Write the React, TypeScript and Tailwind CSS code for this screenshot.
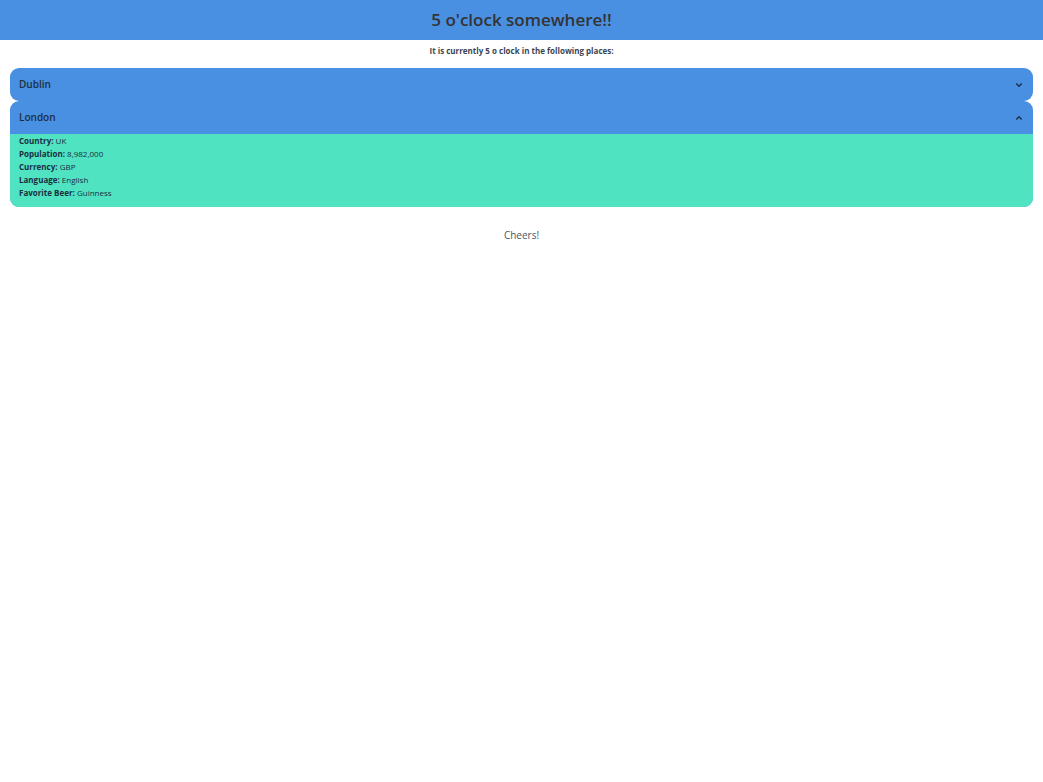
import { useState } from "react";

type Place = {
  name: string;
  facts: [string, string][];
};

const places: Place[] = [
  {
    name: "Dublin",
    facts: [
      ["Country", "Ireland"],
      ["Currency", "EUR"],
      ["Language", "English"],
      ["Favorite Beer", "Guinness"],
    ],
  },
  {
    name: "London",
    facts: [
      ["Country", "UK"],
      ["Population", "8,982,000"],
      ["Currency", "GBP"],
      ["Language", "English"],
      ["Favorite Beer", "Guinness"],
    ],
  },
];

function Chevron({ open }: { open: boolean }) {
  return (
    <svg
      viewBox="0 0 24 24"
      aria-hidden="true"
      className={open ? "size-3 rotate-180 fill-current stroke-current" : "size-3 fill-current stroke-current"}
    >
      <path d="M16.59 8.59L12 13.17 7.41 8.59 6 10l6 6 6-6z" />
    </svg>
  );
}

function PlaceCard({ place, open, onToggle }: { place: Place; open: boolean; onToggle: () => void }) {
  return (
    <section className="overflow-hidden rounded-[9px] bg-[#4a90e2]">
      <h2>
        <button
          type="button"
          aria-expanded={open}
          onClick={onToggle}
          className="flex w-full items-center justify-between px-2 py-2 pl-[9px] text-[10px] leading-[17px] font-semibold"
        >
          {place.name}
          <Chevron open={open} />
        </button>
      </h2>
      {open && (
        <div className="bg-[#50e3c2] px-[9px] pb-2 text-[8px] leading-[13px]">
          {place.facts.map(([label, value]) => (
            <p key={label}>
              <strong className="font-bold">{label}:</strong> {value}
            </p>
          ))}
        </div>
      )}
    </section>
  );
}

export default function App() {
  const [openPlace, setOpenPlace] = useState("London");

  return (
    <div className="font-['Open_Sans','Noto_Sans',sans-serif] text-[#1a2f40]">
      <header className="bg-[#4a90e2] py-2 text-center text-[#333333]">
        <h1 className="text-[17px] leading-6 font-semibold">5 o'clock somewhere!!</h1>
      </header>
      <p className="pt-1 text-center text-[8px] leading-[14px] font-bold text-[#3b4454]">
        It is currently 5 o clock in the following places:
      </p>
      <main className="px-[10px] pt-[10px]">
        {places.map((place) => (
          <PlaceCard
            key={place.name}
            place={place}
            open={openPlace === place.name}
            onToggle={() => setOpenPlace(openPlace === place.name ? "" : place.name)}
          />
        ))}
      </main>
      <footer className="pt-5 text-center text-[10px] leading-4 text-[#4a5568]">Cheers!</footer>
    </div>
  );
}
